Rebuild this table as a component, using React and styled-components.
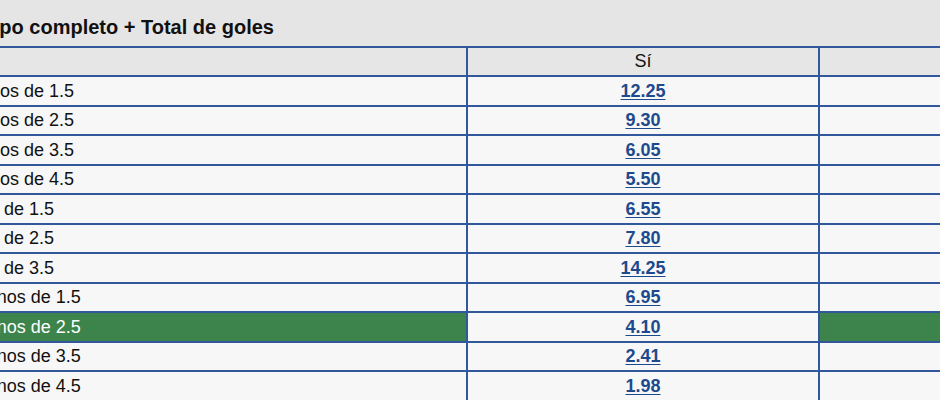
import React from 'react';
import styled, { createGlobalStyle } from 'styled-components';

const GlobalStyle = createGlobalStyle`
  html, body {
    margin: 0;
    padding: 0;
    background: #ffffff;
    overflow: hidden;
  }
  body {
    font-family: "Liberation Sans", Arial, Helvetica, sans-serif;
  }
`;

const rows = [
  { label: 'Empate y menos de 1.5', odds: '12.25' },
  { label: 'Empate y menos de 2.5', odds: '9.30' },
  { label: 'Empate y menos de 3.5', odds: '6.05' },
  { label: 'Empate y menos de 4.5', odds: '5.50' },
  { label: 'Empate y más de 1.5', odds: '6.55' },
  { label: 'Empate y más de 2.5', odds: '7.80' },
  { label: 'Empate y más de 3.5', odds: '14.25' },
  { label: 'Visitante y menos de 1.5', odds: '6.95' },
  { label: 'Visitante y menos de 2.5', odds: '4.10', selected: true },
  { label: 'Visitante y menos de 3.5', odds: '2.41' },
  { label: 'Visitante y menos de 4.5', odds: '1.98' },
];

const App = () => (
  <>
    <GlobalStyle />
    <StyledPanel>
      <StyledTitle>Tiempo completo + Total de goles</StyledTitle>
      <StyledTable>
        <colgroup>
          <col style={{ width: 592 }} />
          <col style={{ width: 352 }} />
          <col style={{ width: 352 }} />
        </colgroup>
        <thead>
          <tr>
            <StyledHeadCell />
            <StyledHeadCell>Sí</StyledHeadCell>
            <StyledHeadCell />
          </tr>
        </thead>
        <tbody>
          {rows.map((row) => (
            <tr key={row.label}>
              <StyledLabelCell $selected={row.selected}>{row.label}</StyledLabelCell>
              <StyledOddsCell>
                <StyledOddsLink href="#">{row.odds}</StyledOddsLink>
              </StyledOddsCell>
              <StyledBlankCell $selected={row.selected} />
            </tr>
          ))}
        </tbody>
      </StyledTable>
    </StyledPanel>
  </>
);

const StyledPanel = styled.div`
  width: 1296px;
  margin-left: -126px;
  background: #e5e5e5;
`;

const StyledTitle = styled.div`
  height: 46px;
  box-sizing: border-box;
  padding: 16px 0 0 79px;
  font-size: 20px;
  font-weight: bold;
  color: #111111;
  line-height: 22px;
`;

const StyledTable = styled.table`
  width: 1296px;
  table-layout: fixed;
  border-collapse: collapse;
  font-size: 18px;
  color: #111111;
`;

const StyledHeadCell = styled.th`
  height: 27px;
  padding: 0;
  border: 2px solid #30589a;
  background: #e6e6e6;
  font-weight: normal;
  text-align: center;
  vertical-align: middle;
`;

const StyledLabelCell = styled.td`
  height: 26.5px;
  padding: 1px 0 0 8px;
  border: 2px solid #30589a;
  background: ${(props) => (props.$selected ? '#3c844b' : '#f7f7f7')};
  color: ${(props) => (props.$selected ? '#ffffff' : '#111111')};
  white-space: nowrap;
  overflow: hidden;
  vertical-align: middle;
`;

const StyledOddsCell = styled.td`
  height: 26.5px;
  padding: 1px 0 0 0;
  border: 2px solid #30589a;
  background: #f7f7f7;
  text-align: center;
  vertical-align: middle;
`;

const StyledBlankCell = styled.td`
  height: 26.5px;
  padding: 1px 0 0 0;
  border: 2px solid #30589a;
  background: ${(props) => (props.$selected ? '#3c844b' : '#f7f7f7')};
`;

const StyledOddsLink = styled.a`
  color: #1d4a8c;
  font-weight: bold;
  text-decoration: underline;
  text-underline-offset: 2px;
`;

export default App;
